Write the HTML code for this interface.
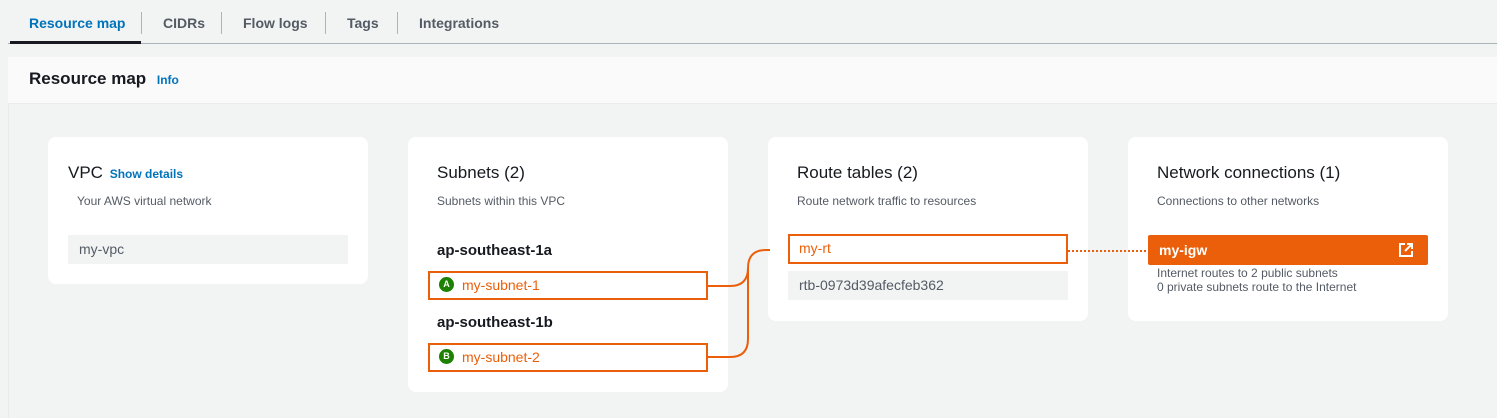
<!DOCTYPE html>
<html><head><style>
*{margin:0;padding:0;box-sizing:border-box}
body{width:1497px;height:418px;background:#f2f3f3;font-family:"Liberation Sans",sans-serif;position:relative;overflow:hidden;color:#16191f}
.a{position:absolute}
.tab{position:absolute;top:15px;font-size:14px;font-weight:bold;color:#545b64}
.sep{position:absolute;top:12px;width:1px;height:22px;background:#aab7b8}
.card{position:absolute;top:137px;width:320px;background:#fff;border-radius:8px}
.h{position:absolute;left:29px;top:26px;font-size:17px;color:#16191f}
.sub{position:absolute;left:29px;top:57px;font-size:12px;color:#545b64}
.box{position:absolute;border:2px solid #ec5f0a;font-size:14px;color:#ec5f0a;padding-left:9px;line-height:25px;background:#fff}
.gray{position:absolute;background:#f2f3f3;font-size:14px;color:#545b64;padding-left:11px;line-height:29px}
.badge{display:inline-block;width:15px;height:15px;border-radius:50%;background:#1d8102;color:#fff;font-size:9px;font-weight:bold;text-align:center;line-height:15px;vertical-align:middle;margin-right:8px;margin-top:-3px}
.az{position:absolute;left:29px;font-size:15px;font-weight:bold}
</style></head><body>
<div class="tab" style="left:29px;color:#0073bb">Resource map</div>
<div class="sep" style="left:141px"></div>
<div class="tab" style="left:163px">CIDRs</div>
<div class="sep" style="left:221px"></div>
<div class="tab" style="left:243px">Flow logs</div>
<div class="sep" style="left:325px"></div>
<div class="tab" style="left:347px">Tags</div>
<div class="sep" style="left:397px"></div>
<div class="tab" style="left:419px">Integrations</div>
<div class="a" style="left:8px;top:43px;width:1489px;height:1px;background:#aab7b8"></div>
<div class="a" style="left:10px;top:41px;width:131px;height:3px;background:#16191f"></div>
<div class="a" style="left:8px;top:57px;width:1489px;height:361px;background:#f2f3f3;border-left:1px solid #e9ebed"></div>
<div class="a" style="left:8px;top:57px;width:1489px;height:47px;background:#fafafa;border-bottom:1px solid #e9ebed"></div>
<div class="a" style="left:29px;top:69px;font-size:17px;font-weight:bold">Resource map <span style="font-size:12px;color:#0073bb;margin-left:6px">Info</span></div>

<div class="card" style="left:48px;height:147px">
<div class="h" style="left:20px">VPC <span style="font-size:12px;font-weight:bold;color:#0073bb;margin-left:2px">Show details</span></div>
<div class="sub">Your AWS virtual network</div>
<div class="gray" style="left:20px;top:98px;width:280px">my-vpc</div>
</div>

<div class="card" style="left:408px;height:255px">
<div class="h">Subnets (2)</div>
<div class="sub">Subnets within this VPC</div>
<div class="az" style="top:105px">ap-southeast-1a</div>
<div class="box" style="left:20px;top:134px;width:280px;height:29px"><span class="badge">A</span>my-subnet-1</div>
<div class="az" style="top:177px">ap-southeast-1b</div>
<div class="box" style="left:20px;top:206px;width:280px;height:29px"><span class="badge">B</span>my-subnet-2</div>
</div>

<div class="card" style="left:768px;height:184px">
<div class="h">Route tables (2)</div>
<div class="sub">Route network traffic to resources</div>
<div class="box" style="left:20px;top:97px;width:280px;height:30px">my-rt</div>
<div class="gray" style="left:20px;top:134px;width:280px">rtb-0973d39afecfeb362</div>
</div>

<div class="card" style="left:1128px;height:184px">
<div class="h">Network connections (1)</div>
<div class="sub">Connections to other networks</div>
<div class="a" style="left:20px;top:98px;width:280px;height:30px;background:#ec5f0a;border-radius:2px;color:#fff;font-size:14px;font-weight:bold;line-height:30px;padding-left:11px">my-igw
<svg class="a" style="right:15px;top:8px" width="14" height="14" viewBox="0 0 14 14"><path d="M6 1H1v12h12V8" fill="none" stroke="#fff" stroke-width="2"/><path d="M8 1h5v5M13 1L6 8" fill="none" stroke="#fff" stroke-width="2"/></svg></div>
<div class="a" style="left:29px;top:129px;font-size:12px;color:#545b64;line-height:14px">Internet routes to 2 public subnets<br>0 private subnets route to the Internet</div>
</div>

<svg class="a" style="left:0;top:0" width="1497" height="418">
<path d="M708 286H730Q748 286 748 268V268Q748 250 766 250H770" fill="none" stroke="#ec5f0a" stroke-width="2"/>
<path d="M708 357H730Q748 357 748 339V268" fill="none" stroke="#ec5f0a" stroke-width="2"/>
<path d="M1068 251H1148" fill="none" stroke="#ec5f0a" stroke-width="2" stroke-dasharray="2 2"/>
</svg>
</body></html>
